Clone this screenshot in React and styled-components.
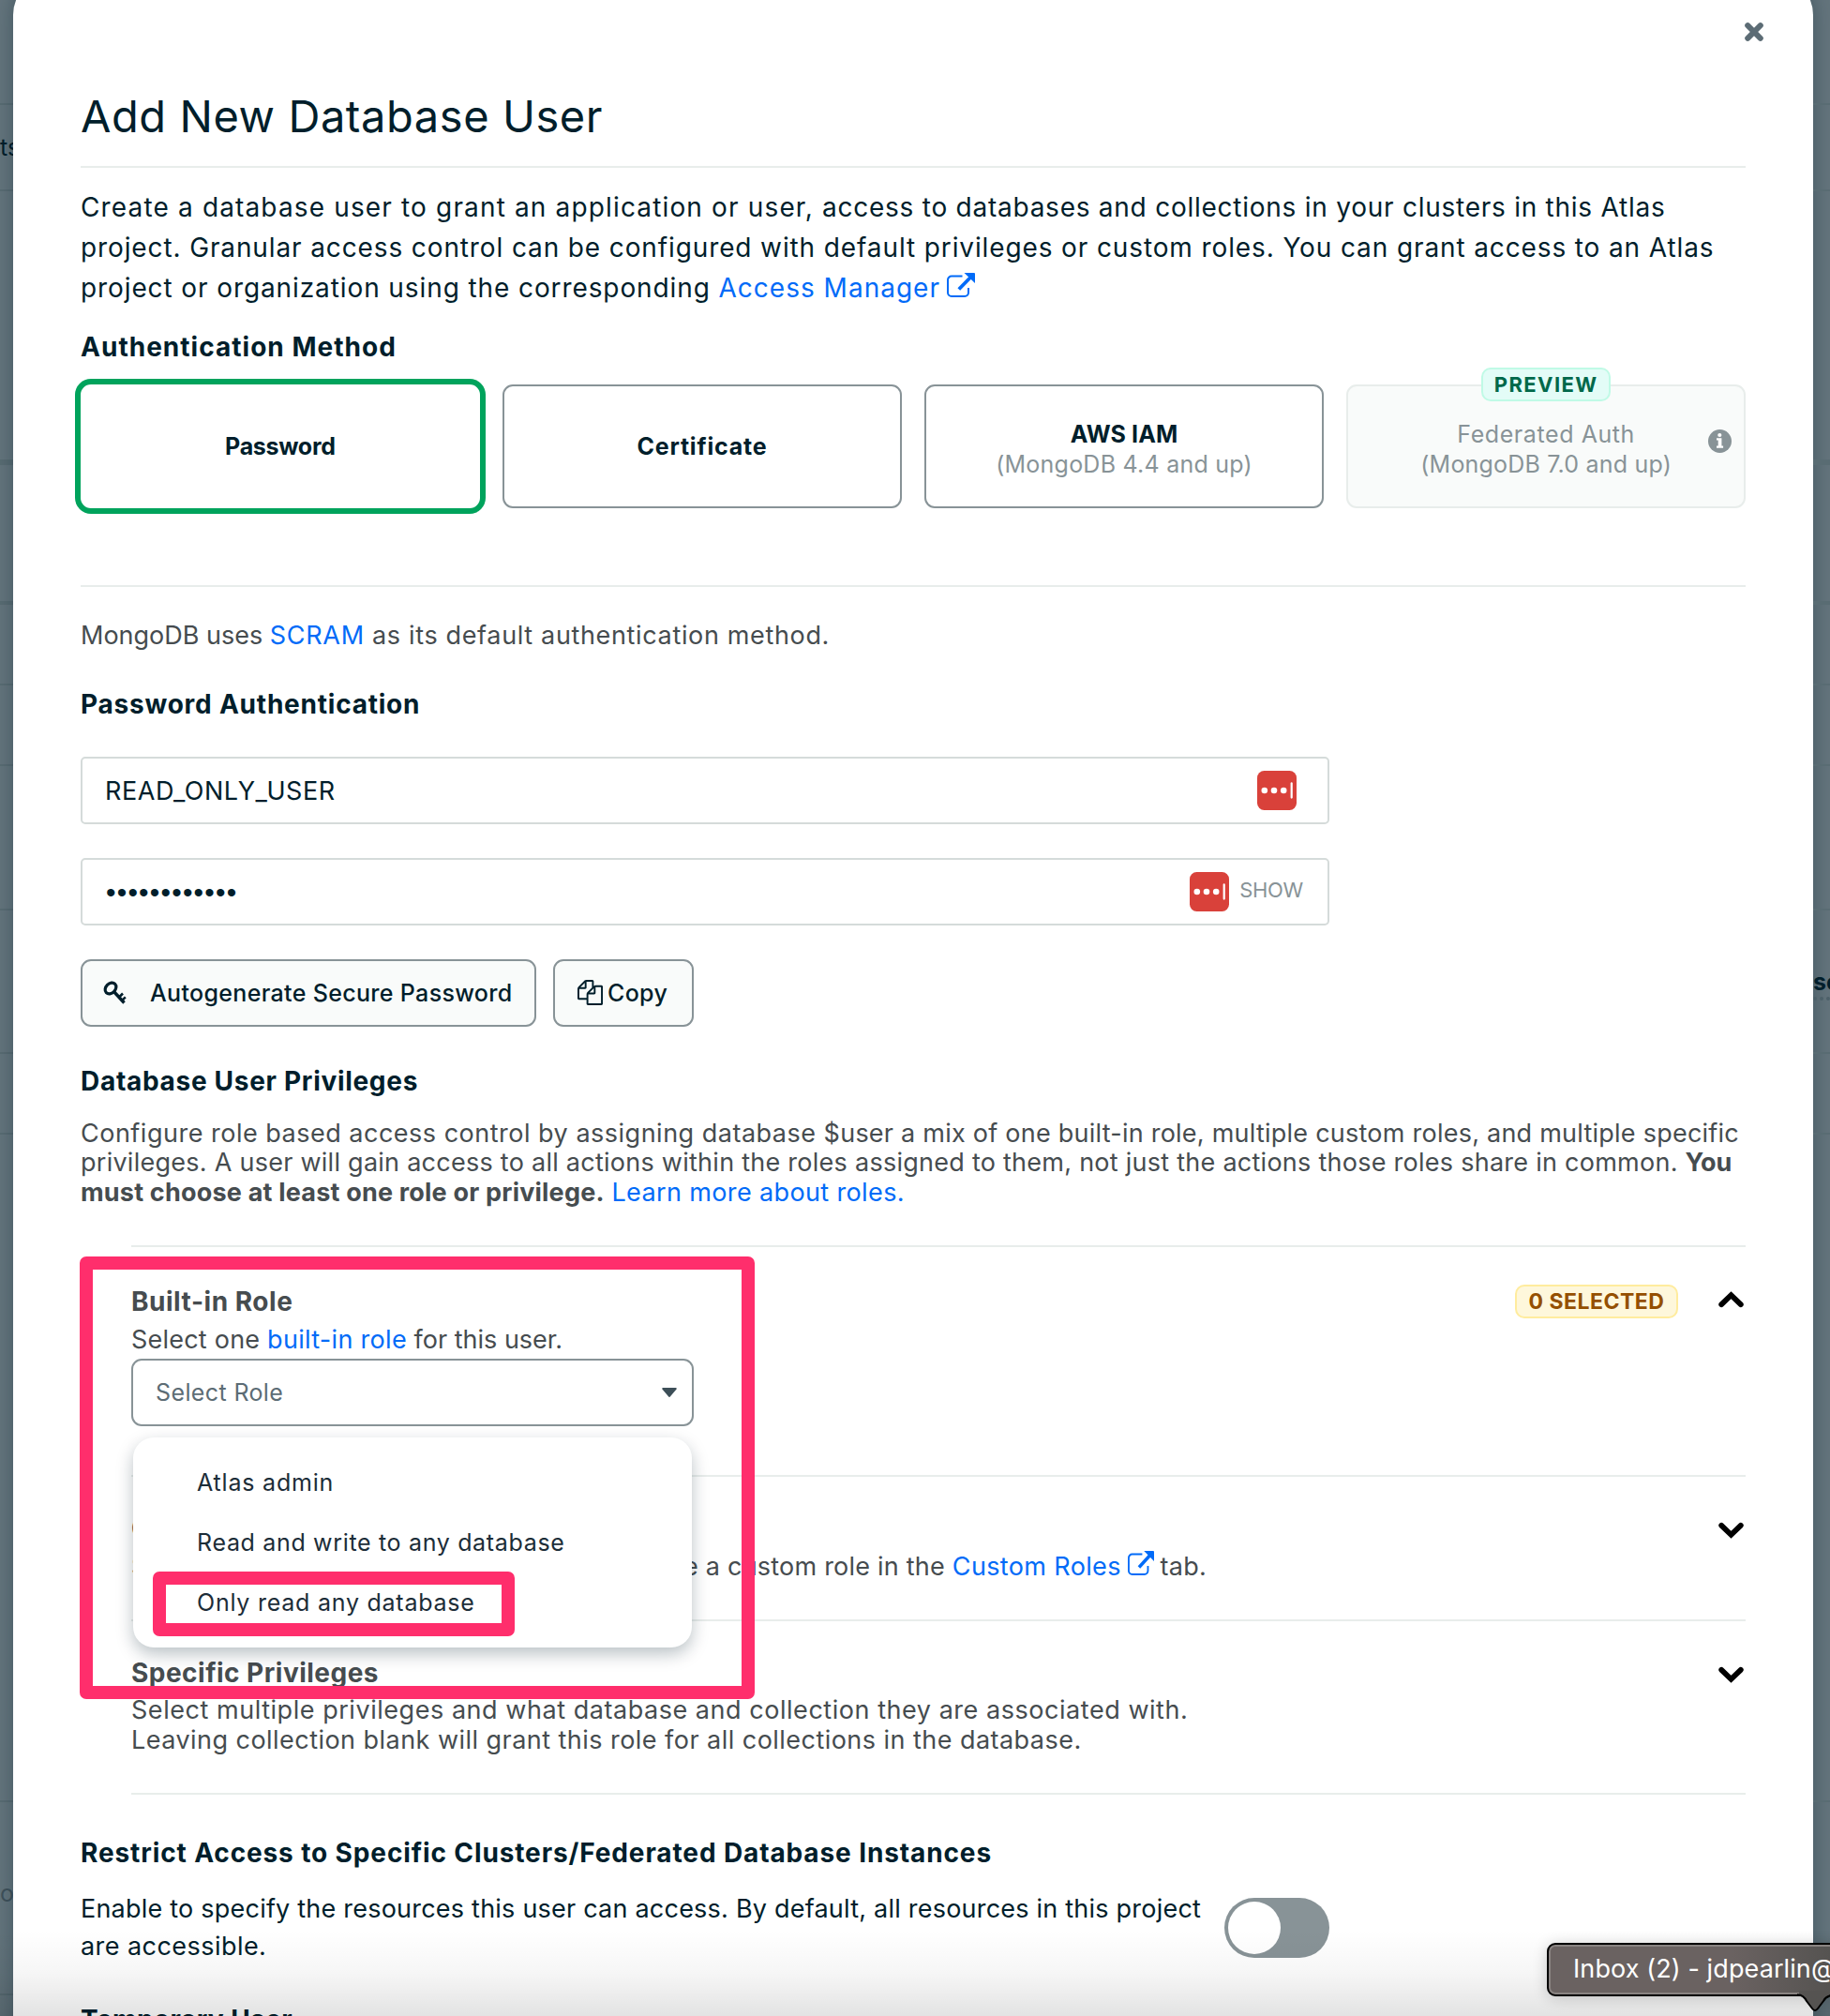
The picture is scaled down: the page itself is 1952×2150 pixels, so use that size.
import React from 'react';
import styled, { createGlobalStyle } from 'styled-components';

const ink = '#001e2b';
const gray = '#464c4f';
const muted = '#889397';
const line = '#e8edeb';
const blue = '#016bf8';

const GlobalStyle = createGlobalStyle`
  * { box-sizing: border-box; }
  html, body { margin: 0; padding: 0; overflow: hidden; }
  body {
    font-family: Inter, "Liberation Sans", sans-serif;
    color: ${ink};
    background: #62737b;
  }
  svg { display: block; flex: none; }
`;

/* ---------- page and backdrop ---------- */

const Page = styled.div`
  position: relative;
  display: grid;
  grid-template-columns: 14px 1920px 18px;
  width: 1952px;
  height: 2150px;
  overflow: hidden;
  background: #64757d;
`;

const Strip = styled.div`
  display: flex;
  flex-direction: column;
  overflow: hidden;
`;

const Band = styled.div`
  flex: none;
  height: ${(p) => p.$height}px;
  padding-top: ${(p) => p.$pad || 0}px;
  border-bottom: ${(p) => p.$rule || 2}px solid #596c73;
  overflow: hidden;
  white-space: nowrap;
  font-size: 25px;
  line-height: 30px;
  font-weight: ${(p) => p.$weight || 400};
  color: ${(p) => p.$color || ink};
`;

const Dotted = styled.span`
  display: block;
  border-bottom: 4px dotted #4c6069;
  height: 35px;
`;

/* ---------- modal ---------- */

const Modal = styled.main`
  display: flex;
  flex-direction: column;
  height: 2250px;
  margin-top: -27px;
  padding: 0 72px;
  border-radius: 43px;
  background: #fff;
  box-shadow: 0 0 22px rgba(0, 30, 43, 0.35);
`;

const CloseRow = styled.div`
  display: flex;
  justify-content: flex-end;
  height: 122px;
  padding-top: 51px;
  margin-right: -19px;
`;

const Title = styled.h1`
  margin: 0;
  height: 84px;
  border-bottom: 2px solid ${line};
  font-size: 47px;
  line-height: 58px;
  font-weight: 400;
  letter-spacing: 0.57px;
`;

const Copy = styled.p`
  margin: ${(p) => p.$gap}px 0 0;
  font-size: ${(p) => p.$size || 27}px;
  line-height: ${(p) => p.$leading || 31.5}px;
  color: ${(p) => (p.$dark ? ink : gray)};
  white-space: nowrap;
`;

const Line = styled.span`
  display: block;
  letter-spacing: ${(p) => p.$track}px;
`;

const Run = styled.span`
  letter-spacing: ${(p) => p.$track}px;
  font-weight: ${(p) => (p.$bold ? 700 : 400)};
`;

const Link = styled.a`
  color: ${blue};
  text-decoration: none;
  letter-spacing: ${(p) => p.$track}px;
`;

const LinkIcon = styled.span`
  display: inline-block;
  margin: 0 ${(p) => p.$after || 0}px 0 ${(p) => p.$before}px;
`;

const Heading = styled.h2`
  margin: ${(p) => p.$gap || 0}px 0 0;
  font-size: 28px;
  line-height: 36px;
  font-weight: 700;
  letter-spacing: ${(p) => p.$track}px;
  color: ${(p) => (p.$soft ? gray : ink)};
  white-space: nowrap;
`;

const Rule = styled.hr`
  width: 100%;
  height: 2px;
  margin: ${(p) => p.$gap}px 0 0;
  border: 0;
  background: ${line};
`;

/* ---------- authentication cards ---------- */

const Cards = styled.div`
  display: grid;
  grid-template-columns: repeat(4, 1fr);
  gap: 24.4px;
  margin-top: 22px;
  height: 132px;
`;

const Card = styled.div`
  position: relative;
  display: flex;
  flex-direction: column;
  align-items: center;
  justify-content: center;
  padding-top: ${(p) => (p.$double ? 6 : 0)}px;
  border: 2px solid ${(p) => (p.$disabled ? line : muted)};
  border-radius: 11px;
  background: ${(p) => (p.$disabled ? '#f9fbfa' : '#fff')};
  ${(p) => p.$selected && 'border-color: #fff; box-shadow: 0 0 0 6px #00a35c;'}
`;

const CardText = styled.span`
  font-size: 25px;
  line-height: ${(p) => (p.$bold ? 31 : 32)}px;
  font-weight: ${(p) => (p.$bold ? 700 : 400)};
  color: ${(p) => (p.$bold ? ink : muted)};
  letter-spacing: ${(p) => p.$track}px;
  white-space: nowrap;
`;

const Badge = styled.span`
  display: flex;
  align-items: center;
  justify-content: center;
  height: 36px;
  border: 2px solid;
  border-radius: 10px;
  font-weight: 700;
  white-space: nowrap;
`;

const PreviewBadge = styled(Badge)`
  position: absolute;
  top: -20px;
  left: 50%;
  width: 138px;
  transform: translateX(-50%);
  border-color: #c0fae6;
  background: #e3fcf7;
  color: #00684a;
  font-size: 22px;
  letter-spacing: 1.4px;
`;

const SelectedBadge = styled(Badge)`
  width: 174px;
  margin-right: 43px;
  border-color: #ffec9e;
  background: #fef7db;
  color: #944f01;
  font-size: 23px;
  letter-spacing: 0.5px;
`;

const InfoSlot = styled.span`
  position: absolute;
  top: 46px;
  right: 13px;
`;

/* ---------- form ---------- */

const Field = styled.div`
  display: flex;
  align-items: center;
  width: 1332px;
  height: 72px;
  margin-top: ${(p) => p.$gap}px;
  padding: 0 ${(p) => p.$right}px 0 ${(p) => p.$left}px;
  border: 2px solid #d5dbda;
  border-radius: 5px;
  font-size: 27px;
`;

const FieldValue = styled.span`
  flex: 1;
  padding-top: 1px;
  letter-spacing: 0.56px;
`;

const Dots = styled.span`
  flex: 1;
  padding-top: 3px;
  font-family: "Liberation Sans", sans-serif;
  font-size: 30px;
  letter-spacing: 1.2px;
`;

const Show = styled.span`
  margin-left: 11px;
  padding-bottom: 3px;
  font-size: 22px;
  letter-spacing: -0.3px;
  color: ${muted};
`;

const Buttons = styled.div`
  display: flex;
  gap: 18px;
  margin-top: 36px;
`;

const Button = styled.button`
  display: flex;
  align-items: center;
  justify-content: flex-start;
  gap: ${(p) => p.$gap}px;
  width: ${(p) => p.$width}px;
  height: 72px;
  padding: 0 0 0 ${(p) => p.$left}px;
  border: 2px solid ${muted};
  border-radius: 11px;
  background: #f9fbfa;
  color: ${ink};
  font: 550 25px Inter, sans-serif;
  letter-spacing: 0.33px;
  white-space: nowrap;
`;

/* ---------- privileges ---------- */

const Sections = styled.div`
  margin: 41px 0 0 54px;
  border-bottom: 2px solid ${line};
`;

const Section = styled.section`
  position: relative;
  height: ${(p) => p.$height}px;
  padding-top: ${(p) => p.$pad}px;
  border-top: 2px solid ${line};
`;

const SectionHead = styled.div`
  display: flex;
  align-items: center;
  height: 36px;
  padding-right: 2px;
`;

const SectionTitle = styled(Heading)`
  flex: 1;
`;

const Select = styled.div`
  position: relative;
  display: flex;
  align-items: center;
  justify-content: space-between;
  width: 600px;
  height: 72px;
  margin-top: 4px;
  padding: 0 16px 0 24px;
  border: 2px solid ${muted};
  border-radius: 11px;
  font-size: 25px;
  letter-spacing: 0.38px;
  color: #5c6c75;
`;

const Menu = styled.ul`
  position: absolute;
  z-index: 2;
  top: 82px;
  left: 0;
  width: 596px;
  height: 224px;
  margin: 0;
  padding: 16px 0 0 68px;
  list-style: none;
  border-radius: 22px;
  background: #fff;
  box-shadow: 0 7px 18px rgba(0, 30, 43, 0.27);
`;

const MenuItem = styled.li`
  font-size: 25px;
  line-height: 64px;
  letter-spacing: ${(p) => p.$track}px;
  color: #1c2d38;
`;

const Highlight = styled.div`
  position: absolute;
  z-index: 3;
  top: ${(p) => p.$top}px;
  left: ${(p) => p.$left}px;
  width: ${(p) => p.$width}px;
  height: ${(p) => p.$height}px;
  border: 14px solid #ff2e6c;
  border-radius: 7px;
`;

/* ---------- restrict access ---------- */

const ToggleRow = styled.div`
  display: flex;
  margin-top: 22px;
  height: 80px;
`;

const ToggleText = styled(Copy)`
  width: 1220px;
`;

const Toggle = styled.div`
  width: 112px;
  height: 64px;
  margin-top: 8px;
  padding: 4px;
  border-radius: 32px;
  background: ${muted};
`;

const Knob = styled.div`
  width: 56px;
  height: 56px;
  border-radius: 50%;
  background: #fff;
`;

/* ---------- overlays ---------- */

const BottomShade = styled.div`
  position: absolute;
  left: 0;
  right: 0;
  bottom: 0;
  height: 92px;
  background: linear-gradient(rgba(0, 0, 0, 0), rgba(0, 0, 0, 0.035) 50%, rgba(0, 0, 0, 0.11));
`;

const Tooltip = styled.div`
  position: absolute;
  left: 1650px;
  top: 2072px;
  width: 360px;
  height: 57px;
  padding-left: 26px;
  border: 2px solid #000;
  border-radius: 9px;
  background: linear-gradient(90deg, #6a6261 0 55%, #555351 84%);
  box-shadow: inset 0 0 0 2px #8a8482, 0 2px 16px rgba(0, 0, 0, 0.18);
  font-size: 27px;
  line-height: 51px;
  letter-spacing: 0.1px;
  color: #fff;
  white-space: nowrap;
`;

const Tail = styled.svg`
  position: absolute;
  left: 265px;
  top: 49px;
`;

/* ---------- icons ---------- */

const ExternalIcon = ({ width = 30 }) => (
  <svg width={width} height="26" viewBox="0 0 30 26" fill="none" preserveAspectRatio="none">
    <path d="M16.5 3.5H5A4 4 0 0 0 1 7.5V21a4 4 0 0 0 4 4h14a4 4 0 0 0 4-4v-5" stroke={blue} strokeWidth="2" />
    <path d="M12.8 17.5 25 5" stroke={blue} strokeWidth="3.8" />
    <path d="M18.5 0H29a1 1 0 0 1 1 1v10z" fill={blue} />
  </svg>
);

const CloseIcon = () => (
  <svg width="20" height="20" viewBox="0 0 20 20">
    <path d="M3.2 3.2 16.8 16.8M16.8 3.2 3.2 16.8" stroke="#5c6c75" strokeWidth="6" strokeLinecap="round" />
  </svg>
);

const InfoIcon = () => (
  <svg width="25" height="25" viewBox="0 0 25 25">
    <circle cx="12.5" cy="12.5" r="12.5" fill={muted} />
    <circle cx="12.3" cy="6" r="2.1" fill="#fff" />
    <path d="M9 9.3h5.4v8.2h1.7v2.2H9v-2.2h1.7v-6H9z" fill="#fff" />
  </svg>
);

const VaultIcon = () => (
  <svg width="42" height="42" viewBox="0 0 42 42">
    <rect width="42" height="42" rx="7.5" fill="#d9413a" />
    <circle cx="7.8" cy="21" r="3.3" fill="#fff" />
    <circle cx="18" cy="21" r="3.3" fill="#fff" />
    <circle cx="28.2" cy="21" r="3.3" fill="#fff" />
    <rect x="35.6" y="12.3" width="2.2" height="17.4" rx="1.1" fill="#fff" />
  </svg>
);

const KeyIcon = () => (
  <svg width="25" height="25" viewBox="0 0 25 25" fill="none" stroke={ink}>
    <ellipse cx="8" cy="8" rx="6.6" ry="5" transform="rotate(-45 8 8)" strokeWidth="3.2" />
    <path d="M11 11 22.5 23.5" strokeWidth="3.4" />
    <path d="M17 17.5 21 13.5M20.3 20.8 23.8 17.3" strokeWidth="2.6" />
  </svg>
);

const CopyIcon = () => (
  <svg width="27" height="27" viewBox="0 0 1792 1792" fill={ink}>
    <path d="M1696 384q40 0 68 28t28 68v1216q0 40-28 68t-68 28h-960q-40 0-68-28t-28-68v-288h-544q-40 0-68-28t-28-68v-672q0-40 20-88t48-76l408-408q28-28 76-48t88-20h416q40 0 68 28t28 68v328q68-40 128-40h416zm-544 213l-299 299h299v-299zm-640-384l-299 299h299v-299zm196 647l316-316v-416h-384v416q0 40-28 68t-68 28h-416v640h512v-256q0-40 20-88t48-76zm956 804v-1152h-384v416q0 40-28 68t-68 28h-416v640h896z" />
  </svg>
);

const Caret = () => (
  <svg width="16" height="10" viewBox="0 0 16 10">
    <path d="M1.2 0h13.6a1 1 0 0 1 .8 1.6L8.8 9.5a1 1 0 0 1-1.6 0L.4 1.6A1 1 0 0 1 1.2 0z" fill="#3d4f58" />
  </svg>
);

const ChevronSvg = styled.svg`
  margin-top: ${(p) => p.$shift}px;
`;

const Chevron = ({ up }) => (
  <ChevronSvg $shift={up ? -5 : 4} width="27" height="18" viewBox="0 0 27 18">
    <path
      d={up ? 'M3.2 14.2 13.5 4.2 23.8 14.2' : 'M3.2 3.8 13.5 13.8 23.8 3.8'}
      fill="none"
      stroke="#000"
      strokeWidth="5.8"
      strokeLinecap="round"
    />
  </ChevronSvg>
);

/* ---------- page ---------- */

export default function App() {
  return (
    <Page>
      <GlobalStyle />
      <Strip>
        <Band $height={112} />
        <Band $height={92} $pad={30}>ts</Band>
        <Band $height={292} $rule={6} />
        <Band $height={149} $rule={4} />
        <Band $height={86} />
        <Band $height={86} />
        <Band $height={154} />
        <Band $height={153} />
        <Band $height={86} />
        <Band $height={712} />
        <Band $height={206} $pad={82} $color="#40525b">o</Band>
      </Strip>

      <Modal>
        <CloseRow><CloseIcon /></CloseRow>
        <Title>Add New Database User</Title>

        <Copy $gap={21} $size={28} $leading={43} $dark>
          <Line $track={0.93}>
            <Run $track={1.15}>Create a database user to grant an application or user, </Run>
            <Run $track={0.75}>access to databases and collections in your clusters in this Atlas</Run>
          </Line>
          <Line $track={0.88}>project. Granular access control can be configured with default privileges or custom roles. You can grant access to an Atlas</Line>
          <Line $track={0.9}>
            project or organization using the corresponding{' '}
            <Link $track={1}>Access Manager<LinkIcon $before={7}><ExternalIcon /></LinkIcon></Link>
          </Line>
        </Copy>

        <Heading $gap={23} $track={1.02}>Authentication Method</Heading>
        <Cards>
          <Card $selected><CardText $bold $track={-0.3}>Password</CardText></Card>
          <Card><CardText $bold $track={0.8}>Certificate</CardText></Card>
          <Card $double>
            <CardText $bold $track={0.1}>AWS IAM</CardText>
            <CardText $track={0.24}>(MongoDB 4.4 and up)</CardText>
          </Card>
          <Card $double $disabled>
            <PreviewBadge>PREVIEW</PreviewBadge>
            <CardText $track={0.58}>Federated Auth</CardText>
            <CardText $track={0.2}>(MongoDB 7.0 and up)</CardText>
            <InfoSlot><InfoIcon /></InfoSlot>
          </Card>
        </Cards>

        <Rule $gap={82} />
        <Copy $gap={36}>
          <Line $track={0.65}>
            <Run $track={0}>MongoDB uses </Run>
            <Link $track={0.7}>SCRAM</Link> as its default authentication method.
          </Line>
        </Copy>

        <Heading $gap={39} $track={0.77}>Password Authentication</Heading>
        <Field $gap={38} $left={24} $right={33}>
          <FieldValue>READ_ONLY_USER</FieldValue>
          <VaultIcon />
        </Field>
        <Field $gap={36} $left={25} $right={26}>
          <Dots>••••••••••••</Dots>
          <VaultIcon />
          <Show>SHOW</Show>
        </Field>
        <Buttons>
          <Button $width={486} $left={22} $gap={25}><KeyIcon />Autogenerate Secure Password</Button>
          <Button $width={150} $left={24} $gap={5}><CopyIcon />Copy</Button>
        </Buttons>

        <Heading $gap={40} $track={0.7}>Database User Privileges</Heading>
        <Copy $gap={22}>
          <Line $track={0.24}>
            <Run $track={0.5}>Configure role based access control by assigning database </Run>
            $user a mix of one built-in role, multiple custom roles, and multiple specific
          </Line>
          <Line $track={0.26}>
            privileges. A user will gain access to all actions within the roles assigned to them, not just the actions those roles share in common.{' '}
            <Run $bold $track={-0.2}>You</Run>
          </Line>
          <Line $track={0.2}>
            <Run $bold $track={0.2}>must choose at least one role or privilege.</Run>{' '}
            <Link $track={0.37}>Learn more about roles.</Link>
          </Line>
        </Copy>

        <Sections>
          <Section $height={245} $pad={40}>
            <SectionHead>
              <SectionTitle $soft $track={0.52}>Built-in Role</SectionTitle>
              <SelectedBadge>0 SELECTED</SelectedBadge>
              <Chevron up />
            </SectionHead>
            <Copy $gap={7}>
              <Line $track={0}><Run $track={0.22}>Select one </Run><Link $track={0.3}>built-in role</Link> for this user.</Line>
            </Copy>
            <Select>
              Select Role
              <Caret />
              <Menu>
                <MenuItem $track={0.8}>Atlas admin</MenuItem>
                <MenuItem $track={0.67}>Read and write to any database</MenuItem>
                <MenuItem $track={0.76}>Only read any database</MenuItem>
                <Highlight $top={143} $left={21} $width={386} $height={69} />
              </Menu>
            </Select>
            <Highlight $top={10} $left={-55.5} $width={720} $height={472} />
          </Section>
          <Section $height={154} $pad={37}>
            <SectionHead>
              <SectionTitle $soft $track={0.42}>Custom Roles</SectionTitle>
              <Chevron />
            </SectionHead>
            <Copy $gap={6}>
              <Line $track={0.22}>
                Select your pre-defined custom role(s). Create a custom role in the{' '}
                <Link $track={0.36}>Custom Roles<LinkIcon $before={7} $after={-1}><ExternalIcon width={28} /></LinkIcon></Link> tab.
              </Line>
            </Copy>
          </Section>
          <Section $height={185} $pad={37}>
            <SectionHead>
              <SectionTitle $soft $track={0.48}>Specific Privileges</SectionTitle>
              <Chevron />
            </SectionHead>
            <Copy $gap={6}>
              <Line $track={0.54}>Select multiple privileges and what database and collection they are associated with.</Line>
              <Line $track={0.46}>Leaving collection blank will grant this role for all collections in the database.</Line>
            </Copy>
          </Section>
        </Sections>

        <Heading $gap={44} $track={0.88}>Restrict Access to Specific Clusters/Federated Database Instances</Heading>
        <ToggleRow>
          <ToggleText $gap={0} $leading={40} $dark>
            <Line $track={0.22}>Enable to specify the resources this user can access. By default, all resources in this project</Line>
            <Line $track={0.45}>are accessible.</Line>
          </ToggleText>
          <Toggle><Knob /></Toggle>
        </ToggleRow>
        <Heading $gap={40} $track={0.4}>Temporary User</Heading>
      </Modal>

      <Strip>
        <Band $height={112} />
        <Band $height={92} />
        <Band $height={292} $rule={6} />
        <Band $height={149} $rule={4} />
        <Band $height={86} />
        <Band $height={86} />
        <Band $height={154} />
        <Band $height={153} $pad={61} $weight={700}><Dotted>se</Dotted></Band>
        <Band $height={86} />
        <Band $height={712} />
        <Band $height={206} />
      </Strip>

      <BottomShade />
      <Tooltip>
        Inbox (2) - jdpearlin@
        <Tail width="44" height="24" viewBox="0 0 44 24">
          <path d="M2 0V3.5Q7 5 10 11L16 19Q19 23 22 19L28 11Q31 5 38 3.5V0Z" fill="#555351" />
          <path d="M0 4.2Q7 4.6 10 11L16 19Q19 23 22 19L28 11Q31 5 40 4.5" fill="none" stroke="#000" strokeWidth="2" />
        </Tail>
      </Tooltip>
    </Page>
  );
}
